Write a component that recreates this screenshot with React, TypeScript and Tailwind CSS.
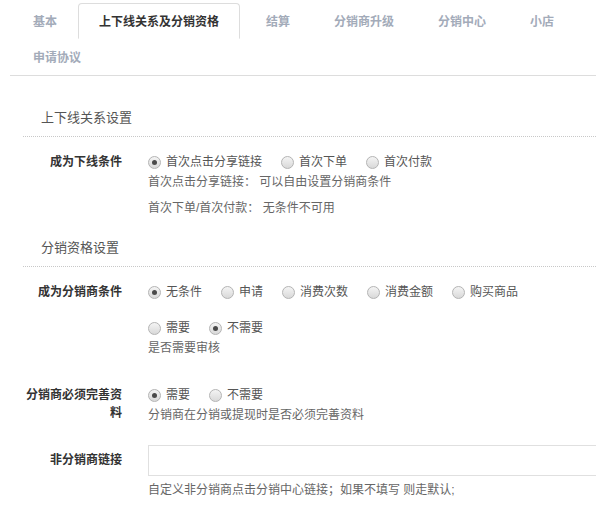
import React from "react";

const tabs = ["基本", "上下线关系及分销资格", "结算", "分销商升级", "分销中心", "小店", "申请协议"];

function Radio({ checked }: { checked?: boolean }) {
  return (
    <span className="flex h-[13px] w-[13px] shrink-0 items-center justify-center rounded-full border border-[#b4b4b4] bg-linear-to-b from-[#f4f4f4] to-[#d9d9d9]">
      {checked && <span className="h-[5px] w-[5px] rounded-full bg-[#4a4a4a]" />}
    </span>
  );
}

function Options({ items, checked }: { items: string[]; checked: number }) {
  return (
    <div className="flex h-[20px] items-center">
      {items.map((item, i) => (
        <label key={item} className="mr-[19px] flex items-center">
          <Radio checked={i === checked} />
          <span className="ml-[5px] text-[12px] leading-[20px] text-[#555]">{item}</span>
        </label>
      ))}
    </div>
  );
}

function SectionTitle({ title }: { title: string }) {
  return (
    <div className="border-b border-dotted border-[#c8c8c8] pb-[8px] pl-[18px] text-[13px] leading-[20px] text-[#555]">
      {title}
    </div>
  );
}

function Row({ label, children, className = "" }: { label: string; children: React.ReactNode; className?: string }) {
  return (
    <div className={`flex ${className}`}>
      <div className="w-[99px] shrink-0 text-right text-[12px] font-bold leading-[20px] text-[#333]">{label}</div>
      <div className="ml-[26px] flex-1">{children}</div>
    </div>
  );
}

export default function App() {
  return (
    <div
      className="min-h-screen w-full overflow-hidden bg-white"
      style={{ fontFamily: '"Liberation Sans", "Noto Sans CJK SC", sans-serif' }}
    >
      {/* Tabs */}
      <div className="ml-[10px] mt-[3px] flex flex-wrap border-b border-[#dddddd] pl-[1px]">
        {tabs.map((tab, i) =>
          i === 1 ? (
            <div
              key={tab}
              className="-mb-px -ml-px mr-[4px] flex h-[36px] items-center rounded-t-[4px] border border-[#dddddd] border-b-transparent bg-white px-[20px] pt-[2px] text-[12px] font-bold text-[#333]"
            >
              {tab}
            </div>
          ) : (
            <div key={tab} className="flex h-[36px] items-center px-[22px] pt-[2px] text-[12px] font-bold text-[#a3abb9]">
              {tab}
            </div>
          )
        )}
      </div>

      <div className="pl-[23px]">
        {/* 上下线关系设置 */}
        <div className="mt-[32px]">
          <SectionTitle title="上下线关系设置" />
        </div>
        <Row label="成为下线条件" className="mt-[15px]">
          <Options items={["首次点击分享链接", "首次下单", "首次付款"]} checked={0} />
          <div className="text-[12px] leading-[20px] text-[#666]">首次点击分享链接： 可以自由设置分销商条件</div>
          <div className="mt-[6px] text-[12px] leading-[20px] text-[#666]">首次下单/首次付款： 无条件不可用</div>
        </Row>

        {/* 分销资格设置 */}
        <div className="mt-[20px]">
          <SectionTitle title="分销资格设置" />
        </div>
        <Row label="成为分销商条件" className="mt-[15px]">
          <Options items={["无条件", "申请", "消费次数", "消费金额", "购买商品"]} checked={0} />
        </Row>
        <Row label="" className="mt-[16px]">
          <Options items={["需要", "不需要"]} checked={1} />
          <div className="text-[12px] leading-[20px] text-[#666]">是否需要审核</div>
        </Row>

        <div className="mt-[27px] flex">
          <div className="w-[99px] shrink-0 pt-[1px] text-right text-[12px] font-bold leading-[18px] text-[#333]">
            分销商必须完善资料
          </div>
          <div className="ml-[26px] flex-1">
            <Options items={["需要", "不需要"]} checked={0} />
            <div className="text-[12px] leading-[20px] text-[#666]">分销商在分销或提现时是否必须完善资料</div>
          </div>
        </div>

        <div className="mt-[20px] flex">
          <div className="w-[99px] shrink-0 pt-[5px] text-right text-[12px] font-bold leading-[20px] text-[#333]">
            非分销商链接
          </div>
          <div className="ml-[26px] flex-1">
            <input className="block h-[31px] w-[480px] border border-[#e0e0e0] bg-white px-2 text-[12px] outline-none" />
            <div className="mt-[4px] text-[12px] leading-[20px] text-[#666]">
              自定义非分销商点击分销中心链接；如果不填写 则走默认;
            </div>
          </div>
        </div>
      </div>
    </div>
  );
}
